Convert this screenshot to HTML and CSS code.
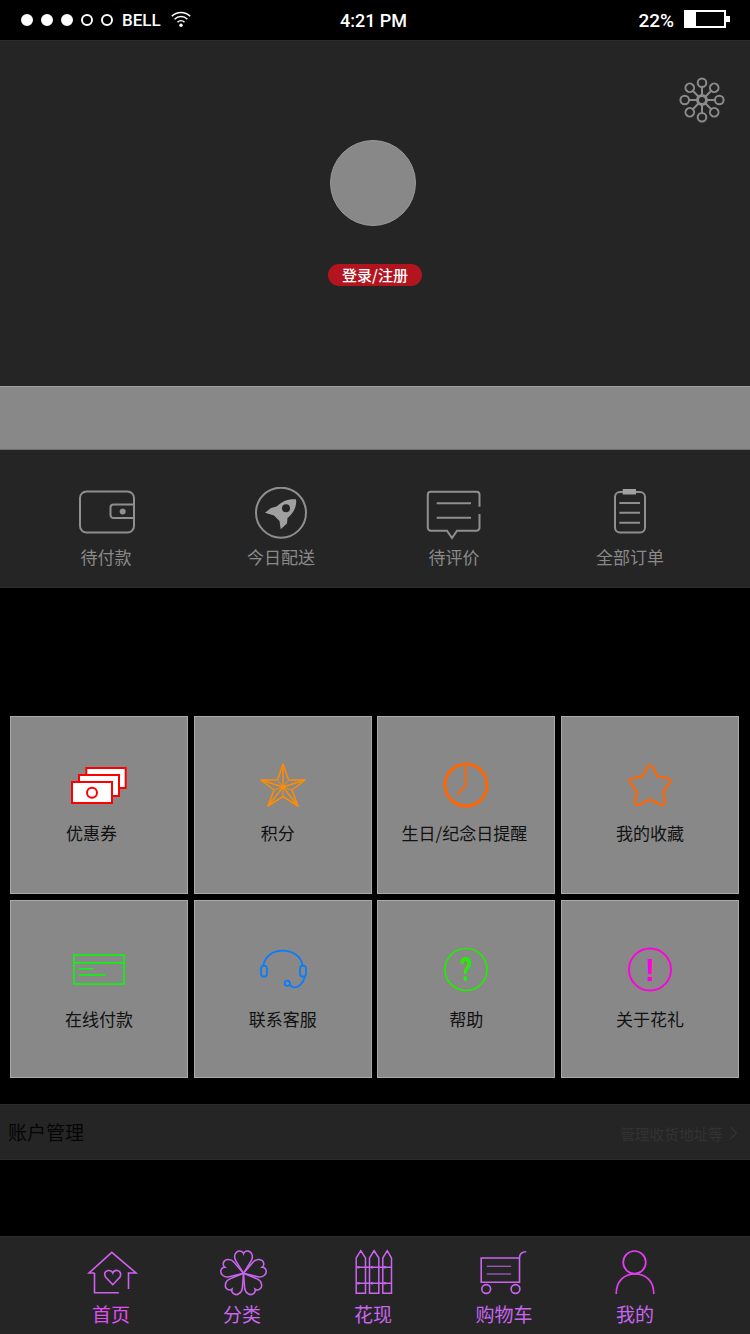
FILE: index.html
```html
<!DOCTYPE html>
<html lang="zh">
<head>
<meta charset="utf-8">
<title>我的</title>
<link rel="stylesheet" href="styles.css">
</head>
<body>
<div class="page">
  <div class="status">
    <div class="status-left">
      <span class="dot on"></span><span class="dot on"></span><span class="dot on"></span><span class="dot"></span><span class="dot"></span>
      <span class="carrier">BELL</span>
      <svg class="wifi" width="20" height="18" viewBox="0 0 20 18"><g fill="none" stroke="#fff" stroke-width="1.5"><path d="M.8 6.2a13 13 0 0 1 18.4 0"/><path d="M3.6 9.2a9 9 0 0 1 12.8 0"/><path d="M6.5 12.2a5 5 0 0 1 7 0"/></g><circle cx="10" cy="15.3" r="1.7" fill="#fff"/></svg>
    </div>
    <div class="time">4:21 PM</div>
    <div class="status-right">
      <span class="percent">22%</span>
      <span class="battery"><span class="battery-fill"></span></span>
    </div>
  </div>

  <header class="profile">
    <svg class="gear" width="50" height="50" viewBox="0 0 50 50">
      <defs><g id="loop"><circle cy="-17.300" r="4.300"/><path d="M0-5V-13"/></g></defs>
      <g transform="translate(25 25)" fill="none" stroke="#8c8c8c" stroke-width="2">
        <use href="#loop"/><use href="#loop" transform="rotate(45)"/><use href="#loop" transform="rotate(90)"/><use href="#loop" transform="rotate(135)"/><use href="#loop" transform="rotate(180)"/><use href="#loop" transform="rotate(225)"/><use href="#loop" transform="rotate(270)"/><use href="#loop" transform="rotate(315)"/>
        <circle r="4.500" stroke-width="3"/>
      </g>
    </svg>
    <div class="avatar"></div>
    <button class="login">登录/注册</button>
  </header>

  <div class="band"></div>

  <nav class="orders">
    <div class="order">
      <svg width="60" height="54" viewBox="0 0 60 54"><g fill="none" stroke="#8f8f8f" stroke-width="2"><path d="M58 17.500V11a6.500 6.500 0 0 0-6.500-6.500H10.500A6.500 6.500 0 0 0 4 11v28a6.500 6.500 0 0 0 6.500 6.500h41A6.500 6.500 0 0 0 58 39v-8"/><path d="M58 17.500H37.500a3 3 0 0 0-3 3v7.500a3 3 0 0 0 3 3H58z"/></g><circle cx="46.700" cy="24.500" r="3" fill="#8f8f8f"/></svg>
      <span>待付款</span>
    </div>
    <div class="order">
      <svg width="60" height="54" viewBox="0 0 60 54"><circle cx="30" cy="25.700" r="25" fill="none" stroke="#8f8f8f" stroke-width="2"/><path fill="#a0a0a0" fill-rule="evenodd" d="M45 12.300C38 11.500 31 14 25.500 19.500L20 21 14 25.700 23 28.500 28.500 34 29.700 42.300 36 36.500 36.500 31C43 25.500 46 19 45 12.300ZM35 17.300a4 4 0 1 1 0 8 4 4 0 0 1 0-8Z"/></svg>
      <span>今日配送</span>
    </div>
    <div class="order">
      <svg width="60" height="54" viewBox="0 0 60 54"><g fill="none" stroke="#8f8f8f" stroke-width="2"><path d="M55.500 19.700V7.700a3 3 0 0 0-3-3H6.800a3 3 0 0 0-3 3v33a3 3 0 0 0 3 3h16.200L28 51l5-7.300h19.500a3 3 0 0 0 3-3V27"/><path d="M12.700 16.300H47M12.700 30.700H47"/></g></svg>
      <span>待评价</span>
    </div>
    <div class="order">
      <svg width="60" height="54" viewBox="0 0 60 54"><rect x="15" y="5" width="30" height="40.500" rx="5" fill="none" stroke="#8f8f8f" stroke-width="2"/><rect x="22.700" y="2" width="13.300" height="5.500" fill="#a0a0a0"/><path d="M19.300 16H40M19.300 25.700H40M19.300 35.700H40" stroke="#8f8f8f" stroke-width="2" fill="none"/></svg>
      <span>全部订单</span>
    </div>
  </nav>

  <section class="grid">
    <div class="tile">
      <svg width="60" height="50" viewBox="0 0 60 50"><g fill="#fff" stroke="#f00" stroke-width="2"><rect x="17.300" y="8" width="39.400" height="20"/><rect x="10" y="15" width="40" height="21"/><rect x="3" y="22" width="40" height="21"/><circle cx="23" cy="32.700" r="5"/></g></svg>
      <span class="nudge-l">优惠券</span>
    </div>
    <div class="tile">
      <svg width="60" height="50" viewBox="0 0 60 50"><g fill="none" stroke="#ff8c00" stroke-width="1.500" stroke-linejoin="round"><path d="M30 4L35.500 20H52L39 30 45 46 30 36.500 15 46 21 30 8 20H24.500Z"/><path d="M30 4V27L52 20M30 27L45 46M30 27L15 46M30 27L8 20"/><path d="M35.500 20L30 27 39 30M30 27V36.500M21 30L30 27 24.500 20" stroke-width="1"/></g></svg>
      <span class="nudge-m">积分</span>
    </div>
    <div class="tile">
      <svg width="60" height="50" viewBox="0 0 60 50"><circle cx="30" cy="25" r="21" fill="none" stroke="#ff6600" stroke-width="3"/><path d="M29.700 7V24.800L21.700 34.300" fill="none" stroke="#ff6600" stroke-width="2" stroke-linecap="round"/></svg>
      <span class="nudge-s">生日/纪念日提醒</span>
    </div>
    <div class="tile">
      <svg width="60" height="50" viewBox="0 0 60 50"><path d="M27 7.500Q30 3 33 7.500L37.700 16.700 47 18Q53 19.500 49 23.500L43.300 31.700 44.800 41.500Q44.800 46.500 40 44.500L30 39.300 20 44.500Q15.200 46.500 15.200 41.500L16.700 31.700 11 23.500Q7 19.500 13 18L22.300 16.700Z" fill="none" stroke="#ff6600" stroke-width="2.200" stroke-linejoin="round"/></svg>
      <span>我的收藏</span>
    </div>
    <div class="tile tile-low">
      <svg width="60" height="50" viewBox="0 0 60 50"><g fill="none" stroke="#0f0" stroke-width="1.500"><rect x="5" y="9" width="50" height="29"/><path d="M5 16.700H55M10 22.700H24M10 29H36.700"/></g></svg>
      <span>在线付款</span>
    </div>
    <div class="tile tile-low">
      <svg width="60" height="50" viewBox="0 0 60 50"><g fill="none" stroke="#0a7cff" stroke-width="1.800"><path d="M10.300 19.700C12 10 20 4.700 29.700 4.700S48 10 49.700 19.700"/><rect x="8" y="19.700" width="6" height="11" rx="3"/><rect x="47" y="19.700" width="6" height="11" rx="3"/><path d="M52 30.500C50 38 45 42 40.500 41.300 38.500 41 37.500 39.500 37 38.500"/><circle cx="34.300" cy="37.300" r="2.600"/></g></svg>
      <span>联系客服</span>
    </div>
    <div class="tile tile-low">
      <svg width="60" height="50" viewBox="0 0 60 50"><circle cx="30" cy="23.500" r="21" fill="none" stroke="#1fee00" stroke-width="1.700"/><text class="mark mark-help" transform="translate(30 35) scale(.72 1)" text-anchor="middle">?</text></svg>
      <span>帮助</span>
    </div>
    <div class="tile tile-low">
      <svg width="60" height="50" viewBox="0 0 60 50"><circle cx="30" cy="23.500" r="21" fill="none" stroke="#ff00dd" stroke-width="1.900"/><text class="mark mark-about" x="30" y="35" text-anchor="middle">!</text></svg>
      <span>关于花礼</span>
    </div>
  </section>

  <div class="account">
    <span class="account-title">账户管理</span>
    <span class="account-hint">管理收货地址等<svg width="9" height="14" viewBox="0 0 9 14"><path d="M1.500 1L7.500 7 1.500 13" fill="none" stroke="#333" stroke-width="1.200"/></svg></span>
  </div>

  <nav class="tabbar">
    <div class="tab">
      <svg width="60" height="50" viewBox="0 0 60 50"><g fill="none" stroke="#d060f0" stroke-width="1.600"><path d="M13.500 25H8L30.800 4.300 55 25H47.500V41M13.500 25V44.700H37.800"/><path d="M31.800 36.700L24.500 29Q22 24 27 22.500 30.500 22 31.800 25 33 22 36.500 22.500 41 24 39 29Z"/></g></svg>
      <span class="tab-bright">首页</span>
    </div>
    <div class="tab">
      <svg width="60" height="50" viewBox="0 0 60 50"><defs><path id="petal" d="M0 0L-8-13C-11-18-8-23.500-4-23.300-2-23.200-.5-22 0-20.500 .5-22 2-23.200 4-23.300 8-23.500 11-18 8-13Z"/></defs><g transform="translate(31.500 25.300) scale(.96)" fill="none" stroke="#c966ee" stroke-width="1.600"><use href="#petal"/><use href="#petal" transform="rotate(72)"/><use href="#petal" transform="rotate(144)"/><use href="#petal" transform="rotate(216)"/><use href="#petal" transform="rotate(288)"/></g></svg>
      <span>分类</span>
    </div>
    <div class="tab">
      <svg width="60" height="50" viewBox="0 0 60 50"><g fill="none" stroke="#c966ee" stroke-width="1.500"><path d="M13.200 45.300V10L17.800 2.700 22.500 10V45.300ZM26.500 45.300V10L31.100 2.700 35.800 10V45.300ZM39.800 45.300V10L44.200 2.700 48.500 10V45.300Z"/><path d="M13.200 19.300H48.500M13.200 35.300H48.500"/></g><g fill="#c966ee"><circle cx="15.500" cy="19.300" r="1.300"/><circle cx="29" cy="19.300" r="1.300"/><circle cx="42" cy="19.300" r="1.300"/><circle cx="15.500" cy="35.300" r="1.300"/><circle cx="29" cy="35.300" r="1.300"/><circle cx="42" cy="35.300" r="1.300"/></g></svg>
      <span>花现</span>
    </div>
    <div class="tab">
      <svg width="60" height="50" viewBox="0 0 60 50"><g fill="none" stroke="#c966ee" stroke-width="1.600"><path d="M52.200 3.700C48 3.700 45.500 5 45.500 10V34.300H7.200V10H45.500"/><circle cx="12.200" cy="41" r="4.400"/><circle cx="41.500" cy="41" r="4.400"/><path d="M12.800 18.300H37.200M12.800 26H37.200" stroke-width="1.100"/></g></svg>
      <span>购物车</span>
    </div>
    <div class="tab">
      <svg width="60" height="50" viewBox="0 0 60 50"><g fill="none" stroke="#e040f0" stroke-width="1.700"><circle cx="29.500" cy="14.300" r="11.300"/><path d="M11.200 46C11.200 33 19 26 30 26S48.800 33 48.800 46"/></g></svg>
      <span>我的</span>
    </div>
  </nav>
</div>
</body>
</html>
```

FILE: styles.css
```css
* { box-sizing: border-box; }
html, body { margin: 0; padding: 0; background: #000; }
body { font-family: "Noto Sans CJK SC", "Noto Sans", sans-serif; }
svg { display: block; }

.page { width: 750px; height: 1334px; display: flex; flex-direction: column; background: #000; overflow: hidden; }

.status { height: 40px; display: grid; grid-template-columns: 1fr auto 1fr; align-items: center; color: #fff; font-family: Roboto, "Liberation Sans", sans-serif; font-size: 18px; font-weight: 500; background: #000; }
.status-left { display: flex; align-items: center; padding-left: 21px; }
.dot { width: 12px; height: 12px; border-radius: 50%; border: 2px solid #fff; margin-right: 8px; flex: none; }
.dot.on { background: #fff; }
.carrier { margin-left: 1px; font-size: 17px; }
.wifi { margin-left: 10px; margin-top: -3px; }
.time { padding-right: 3px; }
.status-right { display: flex; align-items: center; justify-content: flex-end; padding-right: 24px; }
.percent { font-size: 19px; margin-right: 10px; }
.battery { position: relative; width: 42px; height: 18px; border: 2px solid #fff; display: block; margin-top: -2px; }
.battery::after { content: ""; position: absolute; right: -6px; top: 4px; width: 4px; height: 6px; background: #fff; }
.battery-fill { display: block; width: 10px; height: 100%; background: #fff; }

.profile { position: relative; height: 346px; background: #252525; border-top: 1px solid #2c2c2c; display: flex; flex-direction: column; align-items: center; padding-top: 99px; }
.gear { position: absolute; right: 23px; top: 34px; }
.avatar { width: 86px; height: 86px; border-radius: 50%; background: #888; border: 1px solid #999; margin-right: 4px; }
.login { margin: 38px 0 0; padding: 0; width: 94px; height: 22px; border: 0; border-radius: 11px; background: #b3151f; color: #fff; font: 500 15px/22px "Noto Sans CJK SC", sans-serif; }

.band { height: 64px; background: #888; border-top: 1px solid #a0a0a0; border-bottom: 1px solid #6f6f6f; }

.orders { height: 138px; background: #252525; border-bottom: 1px solid #2e2e2e; display: grid; grid-template-columns: 176px 174px 172px 180px; padding: 37px 0 0 18px; }
.order { display: flex; flex-direction: column; align-items: center; color: #8a8a8a; font-size: 17px; line-height: 24px; gap: 4px; }

.grid { margin-top: 128px; padding-left: 10px; display: grid; grid-template-columns: repeat(4, 178px); grid-auto-rows: 178px; column-gap: 5.667px; row-gap: 6px; }
.tile { background: #888; border: 1px solid #aaa; display: flex; flex-direction: column; align-items: center; padding-top: 43px; color: #111; font-size: 17px; line-height: 24px; gap: 11px; }
.tile-low { padding-top: 45px; gap: 11px; }
.nudge-l { padding-right: 15px; }
.nudge-m { padding-right: 10px; }
.nudge-s { padding-right: 4px; }
.mark { font-weight: 700; font-size: 33px; }
.mark-help { font-family: Roboto, sans-serif; fill: #1fee00; }
.mark-about { font-family: "Liberation Sans", sans-serif; font-size: 31px; fill: #ff00dd; }

.account { margin-top: 26px; height: 56px; background: #252525; border-top: 1px solid #2c2c2c; border-bottom: 1px solid #2c2c2c; display: flex; align-items: center; justify-content: space-between; padding: 0 12px 2px 8px; }
.account-title { color: #050505; font-size: 19px; }
.account-hint { color: #333; font-size: 14.7px; display: flex; align-items: center; gap: 6px; padding-top: 4px; }

.tabbar { margin-top: 76px; height: 98px; background: #252525; border-top: 1px solid #2c2c2c; display: grid; grid-template-columns: repeat(5, 131px); padding: 11px 49.5px 0 45.5px; }
.tab { display: flex; flex-direction: column; align-items: center; color: #c966ee; font-size: 19px; line-height: 24px; gap: 4px; }
.tab-bright { color: #e050f0; }
```
